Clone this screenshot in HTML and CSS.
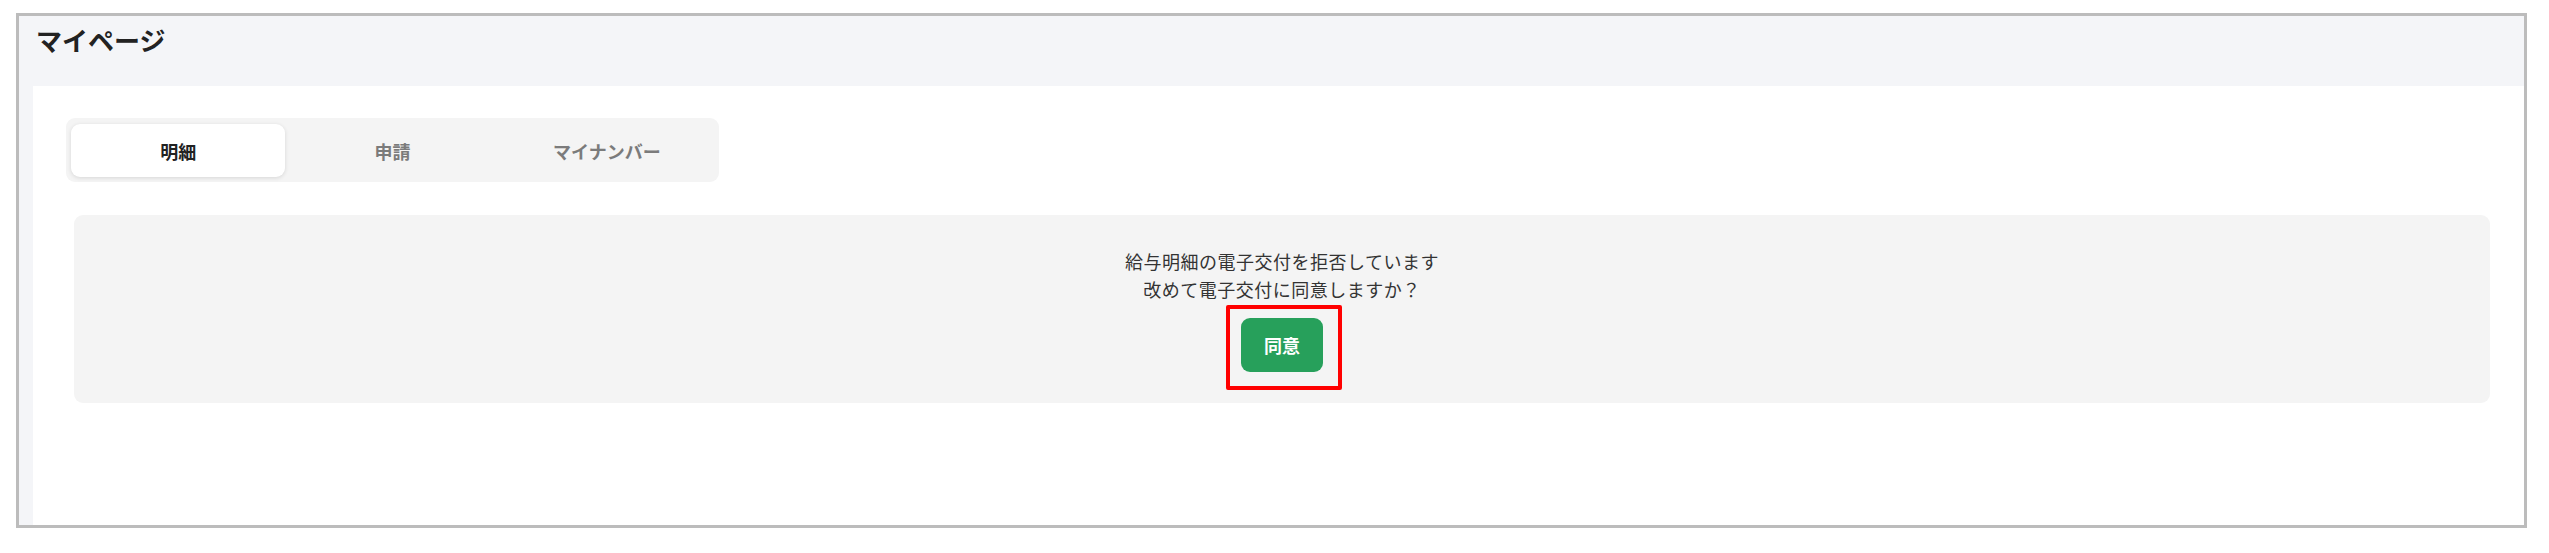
FILE: index.html
```html
<!DOCTYPE html>
<html lang="ja">
<head>
  <meta charset="UTF-8" />
  <meta name="viewport" content="width=device-width, initial-scale=1.0"/>
  <title>マイページ</title>
  <link rel="stylesheet" href="styles.css">
</head>
<body>
  <div class="frame">
    <header class="page-header">
      <h1>マイページ</h1>
    </header>
    <main class="page-main">
      <div class="card">
        <div class="tabs">
          <button class="tab active">明細</button>
          <button class="tab">申請</button>
          <button class="tab">マイナンバー</button>
        </div>

        <div class="notice">
          <p>給与明細の電子交付を拒否しています</p>
          <p>改めて電子交付に同意しますか？</p>
          <div class="agree-wrap">
            <button class="agree">同意</button>
            <span class="highlight"></span>
          </div>
        </div>
      </div>
    </main>
  </div>
</body>
</html>
```

FILE: styles.css
```css
* {
  margin: 0;
  padding: 0;
  box-sizing: border-box;
  font-family: 'Noto Sans CJK JP', 'Noto Sans', sans-serif;
}

body {
  background: #fff;
  padding: 13px 0 0 16px;
}

.frame {
  width: 2511px;
  height: 515px;
  border: 3px solid #bcbcbc;
  background: #f4f5f8;
  display: flex;
  flex-direction: column;
}

.page-header {
  height: 70px;
  padding: 4px 0 0 17px;
}

.page-header h1 {
  font-size: 26px;
  line-height: 39px;
  font-weight: 700;
  color: #222;
}

.page-main {
  flex: 1;
  padding-left: 14px;
  display: flex;
}

.card {
  flex: 1;
  background: #fff;
  padding: 32px 34px 0 33px;
}

.tabs {
  width: 653px;
  height: 64px;
  background: #f4f4f4;
  border-radius: 9px;
  padding: 6px 5px 5px 5px;
  display: grid;
  grid-template-columns: repeat(3, 1fr);
}

.tab {
  border: none;
  background: transparent;
  font-size: 18px;
  font-weight: 700;
  color: #7b7b7b;
  border-radius: 9px;
  cursor: pointer;
}

.tab.active {
  background: #fff;
  color: #222;
  box-shadow: 0 1px 4px rgba(0, 0, 0, 0.12);
}

.notice {
  margin: 33px 0 0 8px;
  background: #f4f4f4;
  border-radius: 9px;
  padding: 32px 0 31px;
  text-align: center;
  color: #333;
}

.notice p {
  font-size: 18px;
  line-height: 28px;
  letter-spacing: 0.5px;
}

.agree-wrap {
  position: relative;
  display: inline-block;
  margin-top: 15px;
  vertical-align: top;
}

.agree {
  display: block;
  width: 82px;
  height: 54px;
  border: none;
  border-radius: 9px;
  background: #27a05b;
  color: #fff;
  font-size: 18px;
  font-weight: 700;
  cursor: pointer;
}

.highlight {
  position: absolute;
  left: -15px;
  top: -13px;
  width: 116px;
  height: 85px;
  border: 4px solid #ff0000;
  border-radius: 2px;
  pointer-events: none;
}
```
